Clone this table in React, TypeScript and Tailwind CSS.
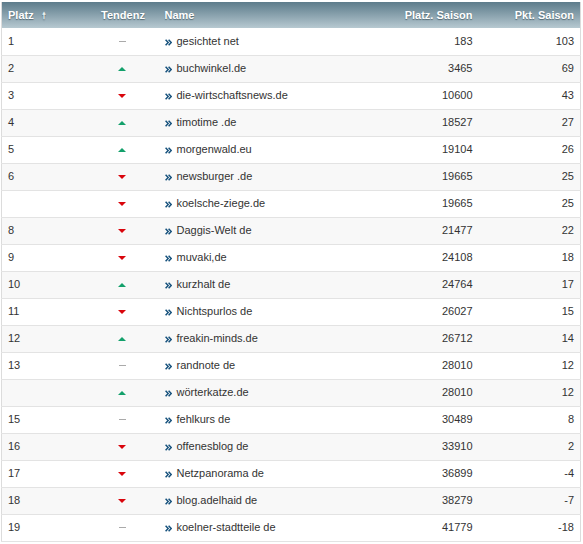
import React from "react"

type Trend = "up" | "down" | "same"

const rows: { platz: string; trend: Trend; name: string; saison: number; pkt: number }[] = [
  { platz: "1", trend: "same", name: "gesichtet net", saison: 183, pkt: 103 },
  { platz: "2", trend: "up", name: "buchwinkel.de", saison: 3465, pkt: 69 },
  { platz: "3", trend: "down", name: "die-wirtschaftsnews.de", saison: 10600, pkt: 43 },
  { platz: "4", trend: "up", name: "timotime .de", saison: 18527, pkt: 27 },
  { platz: "5", trend: "up", name: "morgenwald.eu", saison: 19104, pkt: 26 },
  { platz: "6", trend: "down", name: "newsburger .de", saison: 19665, pkt: 25 },
  { platz: "", trend: "down", name: "koelsche-ziege.de", saison: 19665, pkt: 25 },
  { platz: "8", trend: "down", name: "Daggis-Welt de", saison: 21477, pkt: 22 },
  { platz: "9", trend: "down", name: "muvaki,de", saison: 24108, pkt: 18 },
  { platz: "10", trend: "up", name: "kurzhalt de", saison: 24764, pkt: 17 },
  { platz: "11", trend: "down", name: "Nichtspurlos de", saison: 26027, pkt: 15 },
  { platz: "12", trend: "up", name: "freakin-minds.de", saison: 26712, pkt: 14 },
  { platz: "13", trend: "same", name: "randnote de", saison: 28010, pkt: 12 },
  { platz: "", trend: "up", name: "wörterkatze.de", saison: 28010, pkt: 12 },
  { platz: "15", trend: "same", name: "fehlkurs de", saison: 30489, pkt: 8 },
  { platz: "16", trend: "down", name: "offenesblog de", saison: 33910, pkt: 2 },
  { platz: "17", trend: "down", name: "Netzpanorama de", saison: 36899, pkt: -4 },
  { platz: "18", trend: "down", name: "blog.adelhaid de", saison: 38279, pkt: -7 },
  { platz: "19", trend: "same", name: "koelner-stadtteile de", saison: 41779, pkt: -18 },
]

function TrendMark({ trend }: { trend: Trend }) {
  if (trend === "up")
    return (
      <svg width="8" height="4" viewBox="0 0 8 4" className="block">
        <path d="M0 4 L4 0 L8 4 Z" fill="#13a06b" />
      </svg>
    )
  if (trend === "down")
    return (
      <svg width="8" height="4" viewBox="0 0 8 4" className="block">
        <path d="M0 0 L8 0 L4 4 Z" fill="#d9050c" />
      </svg>
    )
  return <span className="block h-px w-[7px] bg-[#aaa]" />
}

function Chevrons() {
  return (
    <svg width="7" height="7" viewBox="0 0 7 7" className="mr-[5px] inline-block">
      <path d="M0.6 0.7 L3.2 3.5 L0.6 6.3 M3.6 0.7 L6.2 3.5 L3.6 6.3" stroke="#17527d" strokeWidth="1.5" fill="none" />
    </svg>
  )
}

export default function App() {
  return (
    <div className="bg-white pt-[2px] pl-[1px]" style={{ fontFamily: '"Liberation Sans", Arial, sans-serif' }}>
      <table className="w-[579px] table-fixed border-collapse border border-t-0 border-[#dcdcdc] text-[11px] text-[#333]">
        <colgroup>
          <col className="w-[91px]" />
          <col className="w-[61px]" />
          <col className="w-[238px]" />
          <col className="w-[89px]" />
          <col className="w-[100px]" />
        </colgroup>
        <thead>
          <tr className="h-[26px] bg-gradient-to-b from-[#5d7c8b] to-[#b7c9d1] text-white [text-shadow:0_1px_1px_rgba(40,60,70,0.6)]">
            <th className="pl-[6px] text-left font-bold">
              Platz <span className="ml-[5px] text-[9px] text-[#e8eef0]">🠕</span>
            </th>
            <th className="text-center font-bold">Tendenz</th>
            <th className="pl-[11px] text-left font-bold">Name</th>
            <th className="pr-[8px] text-right font-bold">Platz. Saison</th>
            <th className="pr-[6px] text-right font-bold">Pkt. Saison</th>
          </tr>
        </thead>
        <tbody>
          {rows.map((r, i) => (
            <tr key={i} className={`h-[27px] border-b border-[#e3e3e3] ${i % 2 === 1 ? "bg-[#f8f8f8]" : "bg-white"}`}>
              <td className="pl-[6px]">{r.platz}</td>
              <td>
                <div className="flex justify-center pr-[2px]">
                  <TrendMark trend={r.trend} />
                </div>
              </td>
              <td className="pl-[11px] whitespace-nowrap">
                <Chevrons />
                {r.name}
              </td>
              <td className="pr-[8px] text-right">{r.saison}</td>
              <td className="pr-[6px] text-right">{r.pkt}</td>
            </tr>
          ))}
        </tbody>
      </table>
    </div>
  )
}
